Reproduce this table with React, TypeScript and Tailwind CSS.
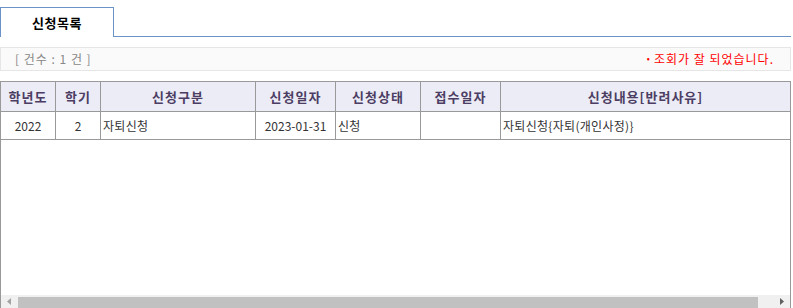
import React from 'react';

const cols = 'grid grid-cols-[54px_45px_155px_80px_85px_80px_1fr]';

const headers = ['학년도', '학기', '신청구분', '신청일자', '신청상태', '접수일자', '신청내용[반려사유]'];

const rows = [
  { year: '2022', term: '2', kind: '자퇴신청', date: '2023-01-31', status: '신청', received: '', content: '자퇴신청{자퇴(개인사정)}' },
];

const App: React.FC = () => {
  return (
    <div className="h-[308px] w-[793px] overflow-hidden bg-white pt-[7px] font-['Noto_Sans_CJK_KR','Noto_Sans',sans-serif] text-[12px]">
      {/* tab bar */}
      <div className="flex h-[30px] w-[791px]">
        <div className="flex w-[114px] items-center justify-center border border-b-0 border-[#6b93c8] text-[13px] font-bold tracking-[0.5px] text-black">
          신청목록
        </div>
        <div className="flex-1 border-b border-[#6b93c8]" />
      </div>

      {/* count bar */}
      <div className="mt-[10px] flex h-[24px] w-[791px] items-center justify-between border border-[#e6e6e6] bg-[#fafafa] pl-[14px] pr-[16px]">
        <span className="tracking-[1px] text-[#888]">[ 건수 : 1 건 ]</span>
        <span className="flex items-center text-[#ff0000]">
          <span className="mr-[4px] text-[9px]">•</span>
          <span className="tracking-[1px]">조회가 잘 되었습니다.</span>
        </span>
      </div>

      {/* grid */}
      <div className="mt-[10px] flex h-[227px] w-[791px] flex-col border border-b-0 border-[#999]">
        <div className="flex-1">
          <div className={`${cols} h-[30px] border-b border-[#999] bg-[#ececf6]`}>
            {headers.map((h, i) => (
              <div
                key={h}
                className={`flex items-center justify-center text-[13px] font-bold tracking-[1px] text-[#4b3d63] ${i > 0 ? 'border-l border-[#999]' : ''}`}
              >
                {h}
              </div>
            ))}
          </div>
          {rows.map((r) => (
            <div key={r.date} className={`${cols} h-[28px] border-b border-[#999] text-[#333]`}>
              <div className="flex items-center justify-center">{r.year}</div>
              <div className="flex items-center justify-center border-l border-[#999]">{r.term}</div>
              <div className="flex items-center border-l border-[#999] pl-[2px] tracking-[0.3px]">{r.kind}</div>
              <div className="flex items-center justify-center border-l border-[#999]">{r.date}</div>
              <div className="flex items-center border-l border-[#999] pl-[2px] tracking-[0.3px]">{r.status}</div>
              <div className="flex items-center border-l border-[#999]">{r.received}</div>
              <div className="flex items-center border-l border-[#999] pl-[2px] tracking-[0.3px]">{r.content}</div>
            </div>
          ))}
        </div>

        {/* horizontal scrollbar, cut off by the page bottom */}
        <div className="flex h-[13px] shrink-0 bg-[#f0f0f0]">
          <div className="flex w-[17px] items-center justify-center">
            <svg width="5" height="7" viewBox="0 0 5 7">
              <path d="M4 0 L0 3.5 L4 7 Z" fill="#a3a3a3" />
            </svg>
          </div>
          <div className="mt-[2px] h-[11px] w-[740px] bg-[#c1c1c1]" />
          <div className="flex flex-1 items-center justify-end pr-[6px]">
            <svg width="5" height="7" viewBox="0 0 5 7">
              <path d="M1 0 L5 3.5 L1 7 Z" fill="#606060" />
            </svg>
          </div>
        </div>
      </div>
    </div>
  );
};

export default App;
